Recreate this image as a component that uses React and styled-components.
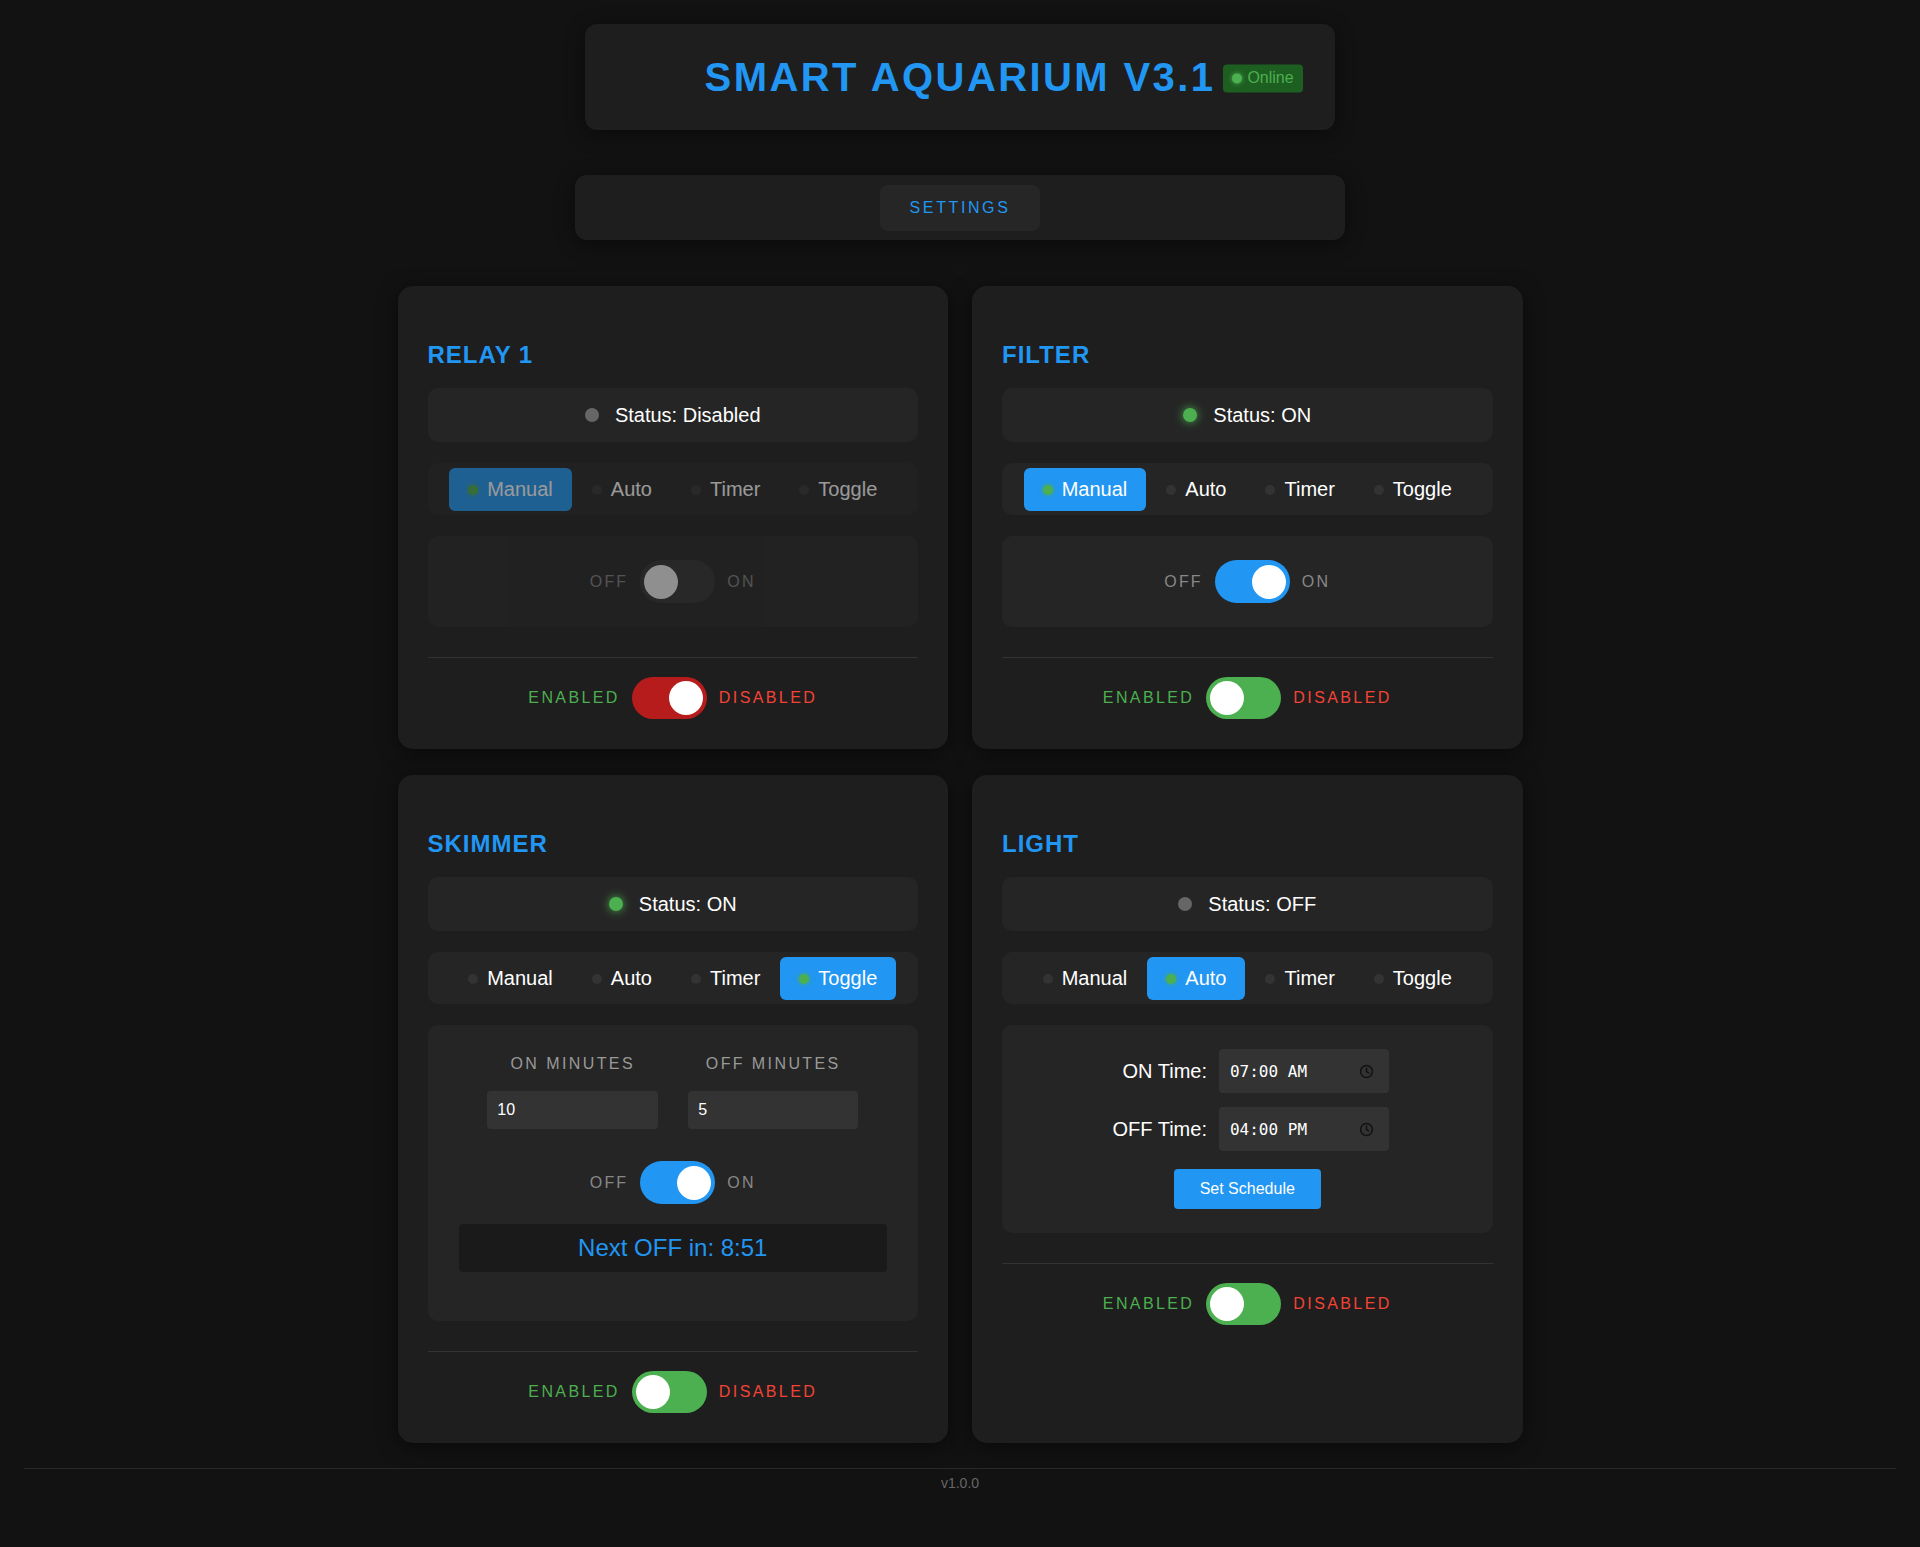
import React from "react";
import styled, { createGlobalStyle } from "styled-components";

const GlobalStyle = createGlobalStyle`
  html, body {
    margin: 0;
    padding: 0;
    background: #121212;
  }
  body {
    font-family: "Liberation Sans", Arial, sans-serif;
    color: #ffffff;
  }
  * { box-sizing: border-box; }
`;

const Page = styled.div`
  padding: 24px 24px 0;
  min-height: 1547px;
`;

const Header = styled.header`
  width: 750px;
  height: 106px;
  margin: 0 auto;
  background: #1e1e1e;
  border-radius: 12px;
  box-shadow: 0 4px 20px rgba(0, 0, 0, 0.45);
  display: flex;
  align-items: center;
  justify-content: center;
`;

const TitleWrap = styled.div`
  position: relative;
`;

const Title = styled.h1`
  margin: 0;
  font-size: 40px;
  line-height: 48px;
  font-weight: 700;
  letter-spacing: 2.4px;
  color: #2196f3;
`;

const OnlineBadge = styled.span`
  position: absolute;
  left: calc(100% + 8px);
  top: 50%;
  transform: translateY(-45%);
  display: flex;
  align-items: center;
  gap: 5px;
  height: 28px;
  padding: 0 9px 0 9px;
  border-radius: 4px;
  background: #1d5e21;
  color: #4caf50;
  font-size: 16px;
  white-space: nowrap;
`;

const BadgeDot = styled.span`
  width: 10px;
  height: 10px;
  border-radius: 50%;
  background: #4caf50;
  box-shadow: 0 0 5px #4caf50;
`;

const SettingsBar = styled.nav`
  width: 770px;
  margin: 45px auto 0;
  padding: 10px 0 9px;
  background: #1e1e1e;
  border-radius: 12px;
  box-shadow: 0 4px 20px rgba(0, 0, 0, 0.45);
  display: flex;
  justify-content: center;
`;

const SettingsButton = styled.button`
  width: 160px;
  height: 46px;
  border: none;
  border-radius: 8px;
  background: #262626;
  color: #2196f3;
  font-family: inherit;
  font-size: 16px;
  letter-spacing: 2.6px;
  cursor: pointer;
`;

const Grid = styled.main`
  width: 1125px;
  margin: 46px auto 0;
  display: grid;
  grid-template-columns: 1fr 1fr;
  column-gap: 24px;
  row-gap: 26px;
`;

const Card = styled.section`
  background: #1e1e1e;
  border-radius: 15px;
  padding: 30px;
  box-shadow: 0 4px 20px rgba(0, 0, 0, 0.5);
  display: flex;
  flex-direction: column;
`;

const CardTitle = styled.h2`
  margin: 24px 0 19px;
  font-size: 24px;
  line-height: 29px;
  font-weight: 700;
  letter-spacing: 1px;
  color: #2196f3;
`;

const StatusBox = styled.div`
  height: 54px;
  background: #252525;
  border-radius: 10px;
  display: flex;
  align-items: center;
  justify-content: center;
  gap: 16px;
  font-size: 20px;
  color: #ffffff;
`;

const StatusDot = styled.span`
  width: 14px;
  height: 14px;
  border-radius: 50%;
  background: ${(p) => (p.$on ? "#4caf50" : "#666666")};
  box-shadow: ${(p) => (p.$on ? "0 0 10px #4caf50" : "none")};
`;

const ModeBar = styled.div`
  margin-top: 21px;
  padding: 5px 0 4px;
  background: #252525;
  border-radius: 10px;
  display: flex;
  justify-content: center;
  gap: 1px;
  opacity: ${(p) => (p.$dimmed ? 0.55 : 1)};
`;

const ModeButton = styled.button`
  height: 43px;
  padding: 0 19px;
  border: none;
  border-radius: 6px;
  background: ${(p) => (p.$active ? "#2196f3" : "transparent")};
  color: #ffffff;
  font-family: inherit;
  font-size: 20px;
  display: flex;
  align-items: center;
  gap: 9px;
  cursor: pointer;
`;

const ModeDot = styled.span`
  width: 10px;
  height: 10px;
  border-radius: 50%;
  background: ${(p) => (p.$active ? "#4caf50" : "#333333")};
  box-shadow: ${(p) => (p.$active ? "0 0 5px #4caf50" : "none")};
`;

const Panel = styled.div`
  margin-top: 21px;
  padding: 24px;
  background: #252525;
  border-radius: 10px;
  opacity: ${(p) => (p.$dimmed ? 0.5 : 1)};
`;

const ControlRow = styled.div`
  display: flex;
  align-items: center;
  justify-content: center;
  gap: 12px;
  margin-top: ${(p) => p.$top || 0}px;
`;

const SwitchLabel = styled.span`
  font-size: 16px;
  letter-spacing: 2.2px;
  color: #888888;
`;

const Switch = styled.span`
  width: 75px;
  height: ${(p) => p.$h || 42}px;
  padding: 4px;
  border-radius: 22px;
  background: ${(p) => p.$track};
  display: flex;
  justify-content: ${(p) => (p.$right ? "flex-end" : "flex-start")};
  align-items: center;
`;

const Knob = styled.span`
  width: 34px;
  height: 34px;
  border-radius: 50%;
  background: #ffffff;
`;

const TimerInputs = styled.div`
  display: grid;
  grid-template-columns: 171px 170px;
  column-gap: 30px;
  justify-content: center;
`;

const FieldGroup = styled.label`
  display: flex;
  flex-direction: column;
  align-items: center;
`;

const FieldLabel = styled.span`
  margin: 6px 0 18px;
  font-size: 16px;
  line-height: 18px;
  letter-spacing: 2.4px;
  color: #999999;
`;

const NumberInput = styled.input`
  width: 100%;
  height: 38px;
  padding: 0 10px;
  border: none;
  border-radius: 4px;
  background: #333333;
  color: #ffffff;
  font-family: inherit;
  font-size: 16px;
  outline: none;
`;

const NextDisplay = styled.div`
  margin: 20px 7px 25px;
  height: 48px;
  border-radius: 4px;
  background: #1a1a1a;
  display: flex;
  align-items: center;
  justify-content: center;
  font-size: 24px;
  color: #2196f3;
`;

const ScheduleGrid = styled.div`
  display: grid;
  grid-template-columns: auto 170px;
  column-gap: 12px;
  row-gap: 14px;
  justify-content: center;
  align-items: center;
  padding-left: 7px;
`;

const TimeLabel = styled.span`
  text-align: right;
  font-size: 20px;
  color: #ffffff;
`;

const TimeField = styled.div`
  height: 44px;
  padding: 0 15px 0 11px;
  border-radius: 4px;
  background: #333333;
  display: flex;
  align-items: center;
  justify-content: space-between;
  font-family: "DejaVu Sans Mono", "Liberation Mono", monospace;
  font-size: 16px;
  color: #ffffff;
`;

const ScheduleButton = styled.button`
  display: block;
  margin: 18px auto 0;
  height: 40px;
  padding: 0 26px;
  border: none;
  border-radius: 4px;
  background: #2196f3;
  color: #ffffff;
  font-family: inherit;
  font-size: 16px;
  cursor: pointer;
`;

const Divider = styled.hr`
  margin: 30px 0 0;
  border: none;
  border-top: 1px solid #333333;
`;

const EnableRow = styled.div`
  padding-top: 19px;
  display: flex;
  align-items: center;
  justify-content: center;
  gap: 12px;
`;

const EnableLabel = styled.span`
  font-size: 16px;
  letter-spacing: 2.4px;
  color: ${(p) => p.$color};
`;

const Footer = styled.footer`
  margin-top: 25px;
  padding: 6px 0 24px;
  border-top: 1px solid #2a2a2a;
  text-align: center;
  font-size: 14px;
  line-height: 16px;
  color: #666666;
`;

const ClockIcon = () => (
  <svg width="15" height="15" viewBox="0 0 16 16" fill="none" stroke="#121212" strokeWidth="1.6" strokeLinecap="round">
    <circle cx="8" cy="8" r="6.3" />
    <path d="M8 4.6V8l2.4 1.6" />
  </svg>
);

const MODES = ["Manual", "Auto", "Timer", "Toggle"];

const devices = [
  { name: "RELAY 1", status: "Disabled", on: false, mode: "Manual", enabled: false, manualOn: false },
  { name: "FILTER", status: "ON", on: true, mode: "Manual", enabled: true, manualOn: true },
  { name: "SKIMMER", status: "ON", on: true, mode: "Toggle", enabled: true },
  { name: "LIGHT", status: "OFF", on: false, mode: "Auto", enabled: true },
];

function OnOffSwitch({ on, top }) {
  return (
    <ControlRow $top={top}>
      <SwitchLabel>OFF</SwitchLabel>
      <Switch $h={43} $track={on ? "#2196f3" : "#333333"} $right={on}>
        <Knob />
      </Switch>
      <SwitchLabel>ON</SwitchLabel>
    </ControlRow>
  );
}

function ModePanel({ device }) {
  const dimmed = !device.enabled;
  if (device.mode === "Manual") {
    return (
      <Panel $dimmed={dimmed}>
        <OnOffSwitch on={device.manualOn} />
      </Panel>
    );
  }
  if (device.mode === "Toggle") {
    return (
      <Panel>
        <TimerInputs>
          <FieldGroup>
            <FieldLabel>ON MINUTES</FieldLabel>
            <NumberInput type="text" defaultValue="10" />
          </FieldGroup>
          <FieldGroup>
            <FieldLabel>OFF MINUTES</FieldLabel>
            <NumberInput type="text" defaultValue="5" />
          </FieldGroup>
        </TimerInputs>
        <OnOffSwitch on top={32} />
        <NextDisplay>Next OFF in: 8:51</NextDisplay>
      </Panel>
    );
  }
  return (
    <Panel>
      <ScheduleGrid>
        <TimeLabel>ON Time:</TimeLabel>
        <TimeField>
          <span>07:00 AM</span>
          <ClockIcon />
        </TimeField>
        <TimeLabel>OFF Time:</TimeLabel>
        <TimeField>
          <span>04:00 PM</span>
          <ClockIcon />
        </TimeField>
      </ScheduleGrid>
      <ScheduleButton>Set Schedule</ScheduleButton>
    </Panel>
  );
}

function DeviceCard({ device }) {
  return (
    <Card>
      <CardTitle>{device.name}</CardTitle>
      <StatusBox>
        <StatusDot $on={device.on} />
        <span>Status: {device.status}</span>
      </StatusBox>
      <ModeBar $dimmed={!device.enabled}>
        {MODES.map((m) => (
          <ModeButton key={m} $active={m === device.mode}>
            <ModeDot $active={m === device.mode} />
            {m}
          </ModeButton>
        ))}
      </ModeBar>
      <ModePanel device={device} />
      <Divider />
      <EnableRow>
        <EnableLabel $color="#4caf50">ENABLED</EnableLabel>
        <Switch $track={device.enabled ? "#4caf50" : "#b71c1c"} $right={!device.enabled}>
          <Knob />
        </Switch>
        <EnableLabel $color="#f44336">DISABLED</EnableLabel>
      </EnableRow>
    </Card>
  );
}

export default function App() {
  return (
    <>
      <GlobalStyle />
      <Page>
        <Header>
          <TitleWrap>
            <Title>SMART AQUARIUM V3.1</Title>
            <OnlineBadge>
              <BadgeDot />
              Online
            </OnlineBadge>
          </TitleWrap>
        </Header>
        <SettingsBar>
          <SettingsButton>SETTINGS</SettingsButton>
        </SettingsBar>
        <Grid>
          {devices.map((d) => (
            <DeviceCard key={d.name} device={d} />
          ))}
        </Grid>
        <Footer>v1.0.0</Footer>
      </Page>
    </>
  );
}
